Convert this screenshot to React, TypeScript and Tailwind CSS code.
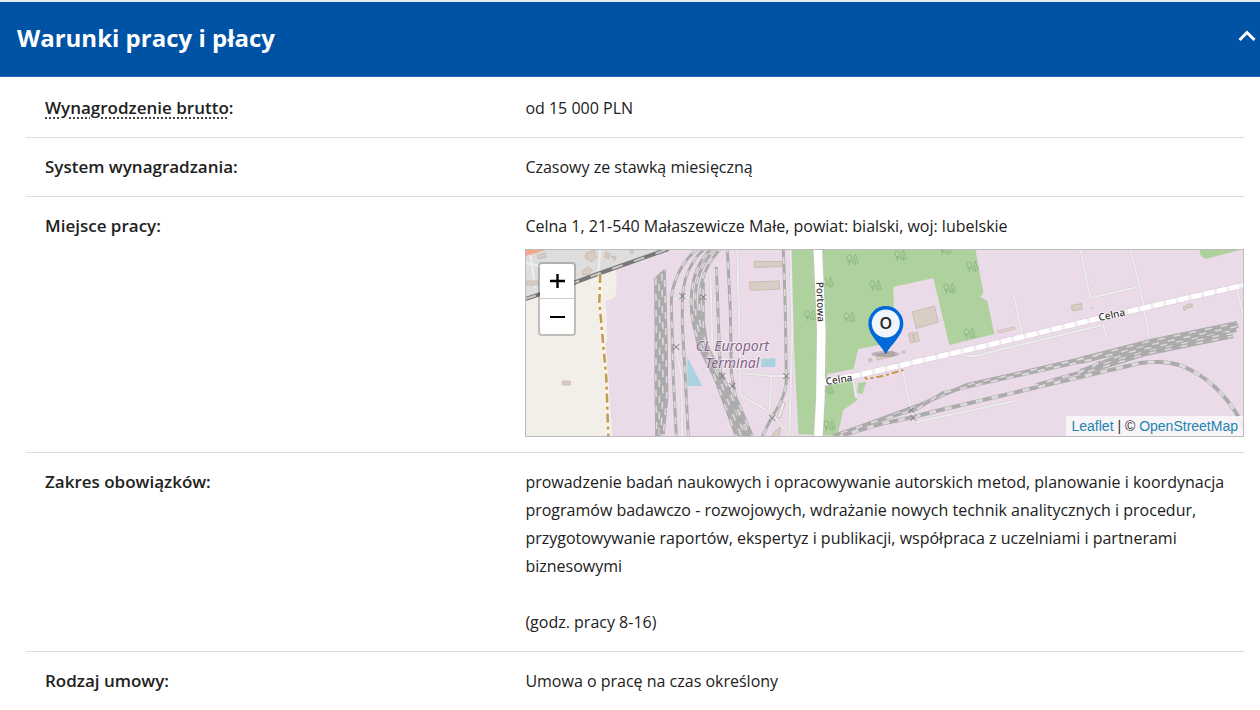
import { useState, type ReactNode } from 'react';

function Rail({ d, offset = 0, width = 3, light = 2 }: { d: string; offset?: number; width?: number; light?: number }) {
  return (
    <g fill="none">
      <path d={d} stroke="#acabac" strokeWidth={width} />
      <path d={d} stroke="#ddd8dc" strokeWidth={light} strokeDasharray="7 9" strokeDashoffset={offset} />
    </g>
  );
}

function Track({ d }: { d: string }) {
  return (
    <g fill="none">
      <path d={d} stroke="#d6ccd4" strokeWidth={3} />
      <path d={d} stroke="#eeebed" strokeWidth={2} />
    </g>
  );
}

function Trees({ x, y }: { x: number; y: number }) {
  return (
    <g transform={`translate(${x} ${y})`} fill="none" stroke="#8fba84" strokeWidth={1}>
      <path d="M-3 5V0M-3 2L-5 0M-3 3L-1 1" />
      <ellipse cx={-3} cy={-2} rx={2.5} ry={3} />
      <path d="M3 5V-1M3 -6L0 3H6Z" />
    </g>
  );
}

function Switch({ x, y }: { x: number; y: number }) {
  return <path d={`M${x - 3} ${y - 3}l6 6m0 -6l-6 6`} stroke="#777" strokeWidth={1} fill="none" />;
}

const westYard = [
  'M655.5 278L656 330L655.5 380L656.500 436',
  'M658.5 275L659.500 330L659 380L659 436',
  'M661.5 272L662.500 330L662.500 395L660.500 436',
  'M664 269L665.500 330L666.500 395L663 434',
];

const curves = [
  'M697 249C680 263 671 285 671 302L673 378L676 436',
  'M704 249C690 261 682 280 682 302L682 325L685 378L688 436',
  'M710 249C698 262 690 280 691 305C691 330 702 350 714 376L736 436',
  'M715 249C702 262 694 280 695 305C695 332 705 350 718 376L741 436',
  'M720 249C706 264 699 280 699 305C697 335 709 350 722 376L745 436',
  'M703 282L703 322C702 345 713 363 725 384L748 436',
  'M716 267L718 320L720 372L733 400L750 436',
  'M727 249L730 310L731 372L735 396L752 436',
  'M783 249L785 310L786 378C786 396 776 410 771 418L762 436',
];

const eastYard = [
  'M1080 359L1150 341L1237 323',
  'M1080 362L1150 345L1238 326',
  'M1080 371L1130 352L1236 330',
  'M1090 368L1140 353L1226 334',
  'M1080 374L1145 354L1233 336',
];

const trees: [number, number][] = [
  [852, 260], [900, 256], [945, 250], [972, 267], [875, 286], [949, 289],
  [849, 318], [969, 334], [810, 316], [827, 283], [829, 426], [827, 390],
];

function MapDrawing() {
  const celna = 'M824 383L863 374L980 347L1100 318L1244 285';
  return (
    <svg
      className="block h-full w-full"
      viewBox="525 250 718 186"
      preserveAspectRatio="xMidYMid slice"
      role="img"
      aria-label="Mapa: Celna 1, Małaszewicze Małe"
    >
      <rect x="325" y="50" width="1118" height="586" fill="#ebdbe8" />
      <path d="M525 249H665L600 273L525 299Z" fill="#dedddd" />
      <path d="M525 249H548L536 253L525 256Z" fill="#f3a78d" />
      <path d="M525 299L600 273L616 270V294Q615 299 606 301L607 340L605 345L608 380L612 436H525Z" fill="#f2eee8" />
      <g fill="none" stroke="#eeeded" strokeWidth={2}>
        <path d="M530 255L535 288M600 250L598 272M525 263L549 268" />
      </g>
      <g fill="#d7cbc2" stroke="#c3b4aa" strokeWidth={0.7}>
        <path d="M537 255L545 253L546 257L538 259ZM586 253L594 250L596 258L591 262L585 258ZM606 252L610 254L608 259L604 257ZM611 256L616 257L614 261ZM582 271L588 267L592 270L588 275L582 275ZM525 281H538V285H525ZM630 250H633V253H630ZM562 381H570V385H562Z" />
      </g>

      <g fill="#aed19e">
        <path d="M789 249H975L983 292L980 297L987 301L994 334L949 345L933 278L893 287L894 342L858 349L853 369L827 374V384L852 379L857 400L843 410L837 436L798 434Z" />
        <path d="M858 383L866 382L862 394L857 393Z" />
        <path d="M1199 249L1200 255L1205 259L1244 249Z" />
      </g>
      {trees.map(([x, y]) => (
        <Trees key={`${x}-${y}`} x={x} y={y} />
      ))}

      <g fill="#dacdc5" stroke="#c5b5ab" strokeWidth={0.8}>
        <path d="M754 261.500H782V266.500L754 267.500ZM749 282L779 281V289L750 290.500Z" />
        <path d="M912 312L934 306L938 322L916 328.500ZM908 334L912 332.500L914 342L910 343ZM913 333L917 332L919 341L914 342ZM902 351H904.500V353H902ZM868 359L871 358L872 361L869 362ZM876 355L893 351L894 356L877 360Z" />
        <path d="M1071 305.500L1081 303.500L1082 309L1072 311ZM1091 307L1093 309ZM1183 307L1188 304H1192V307L1187 308L1184 311Z" />
        <path d="M997 331L1014 327L1015 329L999 333Z" fill="#eadad8" />
        <path d="M785 403L782 402L777 417L780 418Z" fill="#f0ebed" />
        <path d="M774 432L781 426L779 436H772Z" />
      </g>

      <Track d="M710 270L712 345" />
      <Track d="M737 249L740 372V395L771 413L787 433" />
      <Track d="M740 373L771 376L787 376M771 376L769 413" />
      <Track d="M790 249L792 330L789 436" />
      <Track d="M671 302Q672 298 682 298L703 297" />
      <Track d="M676 350L681 375L682 436" />
      <Track d="M902 370L911 410L916 422L1015 401" />
      <Track d="M1013 293L1022 335" />
      <Track d="M1080 249L1090 298L1137 287M1130 249L1140 289L1149 338" />
      <Track d="M959 354Q972 359 990 352L1103 325L1106 337" />
      <Track d="M1236 286L1243 316" />
      <Track d="M853 378L856 398" />
      <path d="M654 278L664 269L667 330L668 400L662 436H655Z" fill="#acabac" />
      {westYard.map((d, i) => (
        <Rail key={d} d={d} offset={i * 7} light={1.6} />
      ))}
      <path d="M690 310L703 310L708 345L728 385L752 436H735L714 380L696 345Z" fill="#b3b0b3" />
      {curves.map((d, i) => (
        <Rail key={d} d={d} offset={i * 5} light={1.7} />
      ))}
      <path d="M687 357L702 386H687ZM761 359L775 358V367H761Z" fill="#aad3df" />
      {eastYard.map((d, i) => (
        <Rail key={d} d={d} offset={i * 6} width={4} light={1.6} />
      ))}
      <Rail d="M833 436L857 428L917 406L940 396L967 385L1007 376L1098 355" width={4} />
      <Rail d="M833 436L870 423L917 409L942 393L967 387L1007 378L1098 358" offset={8} />
      <Rail d="M840 436L880 424L913 417L940 410L1080 377L1140 363Q1165 360 1182 366Q1218 381 1240 420L1248 436" width={4} offset={4} light={3} />
      <Rail d="M1035 385L1080 372L1100 362" offset={4} />
      {[[682, 296], [703, 297], [676, 347], [722, 376], [732, 386], [786, 376], [772, 418], [911, 410], [913, 418]].map(([x, y]) => (
        <Switch key={`${x}-${y}`} x={x} y={y} />
      ))}

      <g fill="none">
        <path d="M525 299L573 283L600 273L668 249" stroke="#777777" strokeWidth={4} />
        <path d="M525 299L573 283L600 273L668 249" stroke="#c9c9c9" strokeWidth={2} strokeDasharray="11 12" />
        <path d="M600 274L599 302L606 378L608 436" stroke="#faf4e8" strokeWidth={4} />
        <path d="M600 274L599 302L606 378L608 436" stroke="#c09a50" strokeWidth={2.5} strokeDasharray="9 4 3 4" />
        <path d="M863 374L866 379L882 376L903 370" stroke="#c29443" strokeWidth={2} strokeDasharray="7 3 3 3" />
        <path d={celna} stroke="#d6cbd4" strokeWidth={6} />
        <path d={celna} stroke="#f1edf0" strokeWidth={5} />
        <path d={celna} stroke="#ffffff" strokeWidth={5} strokeDasharray="10 3" />
        <path d="M817.500 249L821 330L820 400L818 436" stroke="#c8c3c3" strokeWidth={10} />
        <path d="M817.500 249L821 330L820 400L818 436" stroke="#ffffff" strokeWidth={8.5} />
        <path d="M820 383L852 376" stroke="#ffffff" strokeWidth={5} />
      </g>

      <g
        fontFamily="'Noto Sans', sans-serif"
        fontSize={10}
        fontWeight={500}
        fill="#333333"
        stroke="#ffffff"
        strokeWidth={1.5}
        strokeOpacity={0.7}
        paintOrder="stroke"
      >
        <text transform="translate(816 282) rotate(88)">Portowa</text>
        <text transform="translate(826 385) rotate(-9)">Celna</text>
        <text transform="translate(1099 321) rotate(-12)">Celna</text>
      </g>
      <g
        fontFamily="'Noto Sans', sans-serif"
        fontSize={14}
        fontStyle="italic"
        fill="#85608a"
        stroke="#ffffff"
        strokeWidth={1.5}
        strokeOpacity={0.6}
        paintOrder="stroke"
        textAnchor="middle"
      >
        <text x="732" y="351">CL Europort</text>
        <text x="732" y="368">Terminal</text>
      </g>

      <ellipse cx="885" cy="354" rx="14" ry="3" fill="#555555" opacity="0.3" />
      <path d="M885.500 354.500C882 346 868 336 868 323.500A17.500 17.500 0 0 1 903 323.500C903 336 889 346 885.500 354.500Z" fill="#0068d9" />
      <circle cx="885.5" cy="323.500" r="14" fill="#f0f5fb" />
      <text x="885.5" y="329" textAnchor="middle" fontFamily="'Open Sans', sans-serif" fontSize={16} fontWeight={600} fill="#222222">
        O
      </text>
    </svg>
  );
}

function LocationMap() {
  return (
    <div className="relative mt-[9px] h-[188px] overflow-hidden border border-[#bcbcbc]">
      <MapDrawing />
      <div className="absolute left-3 top-3 flex w-[38px] flex-col overflow-hidden rounded border-2 border-black/20 bg-white bg-clip-padding text-black">
        <button type="button" aria-label="Przybliż" className="flex h-[35px] items-center justify-center border-b border-[#cccccc]">
          <svg className="size-4" viewBox="0 0 16 16" stroke="currentColor" strokeWidth="2.4" aria-hidden="true">
            <path d="M8.500 1V15M1 8H16" />
          </svg>
        </button>
        <button type="button" aria-label="Oddal" className="flex h-[35px] items-center justify-center">
          <svg className="size-4" viewBox="0 0 16 16" stroke="currentColor" strokeWidth="2" aria-hidden="true">
            <path d="M1 8H16" />
          </svg>
        </button>
      </div>
      <div className="absolute bottom-0 right-0 bg-white/70 px-[5px] font-['Liberation_Sans',Arial,sans-serif] text-[14px] leading-[20px] text-[#333333]">
        <a href="#leaflet" className="text-[#1c85b0]">Leaflet</a> | © <a href="#osm" className="text-[#1c85b0]">OpenStreetMap</a>
      </div>
    </div>
  );
}

function Row({ label, children }: { label: ReactNode; children: ReactNode }) {
  return (
    <div className="grid grid-cols-[41%_minmax(0,1fr)] border-b border-[#dddddd] py-[15px]">
      <dt className="pl-[19px] text-[17px] font-semibold">{label}</dt>
      <dd>{children}</dd>
    </div>
  );
}

export default function App() {
  const [open, setOpen] = useState(true);
  return (
    <main className="min-h-screen overflow-x-hidden bg-white font-['Open_Sans',sans-serif] text-[16px] leading-[28px] text-[#212121]">
      <h2 className="border-t-2 border-[#e6ebf0] bg-[#0052a5] text-[24px] font-bold leading-[32px] text-white">
        <button
          type="button"
          aria-expanded={open}
          onClick={() => setOpen(!open)}
          className="flex w-full items-center justify-between border-b border-[#2068b2] pb-[22px] pl-[17px] pr-1 pt-5 text-left"
        >
          Warunki pracy i płacy
          <svg className="mb-1 h-3 w-[18px]" viewBox="0 0 18 12" fill="none" stroke="currentColor" strokeWidth="3" aria-hidden="true">
            <path d="M1.500 10L9 2.500L16.500 10" />
          </svg>
        </button>
      </h2>
      {open && (
        <dl className="ml-[26px] mr-4 pt-0.5">
          <Row
            label={
              <>
                <abbr title="Kwota przed odliczeniem podatku i składek" className="underline decoration-[#444444] decoration-dotted decoration-2 underline-offset-[3px]">
                  Wynagrodzenie brutto
                </abbr>
                :
              </>
            }
          >
            od 15 000 PLN
          </Row>
          <Row label="System wynagradzania:">Czasowy ze stawką miesięczną</Row>
          <Row label="Miejsce pracy:">
            Celna 1, 21-540 Małaszewicze Małe, powiat: bialski, woj: lubelskie
            <LocationMap />
          </Row>
          <Row label="Zakres obowiązków:">
            <p>
              prowadzenie badań naukowych i opracowywanie autorskich metod, planowanie i koordynacja programów badawczo -
              rozwojowych, wdrażanie nowych technik analitycznych i procedur, przygotowywanie raportów, ekspertyz i
              publikacji, współpraca z uczelniami i partnerami biznesowymi
            </p>
            <p className="mt-7">(godz. pracy 8-16)</p>
          </Row>
          <Row label="Rodzaj umowy:">Umowa o pracę na czas określony</Row>
        </dl>
      )}
    </main>
  );
}
